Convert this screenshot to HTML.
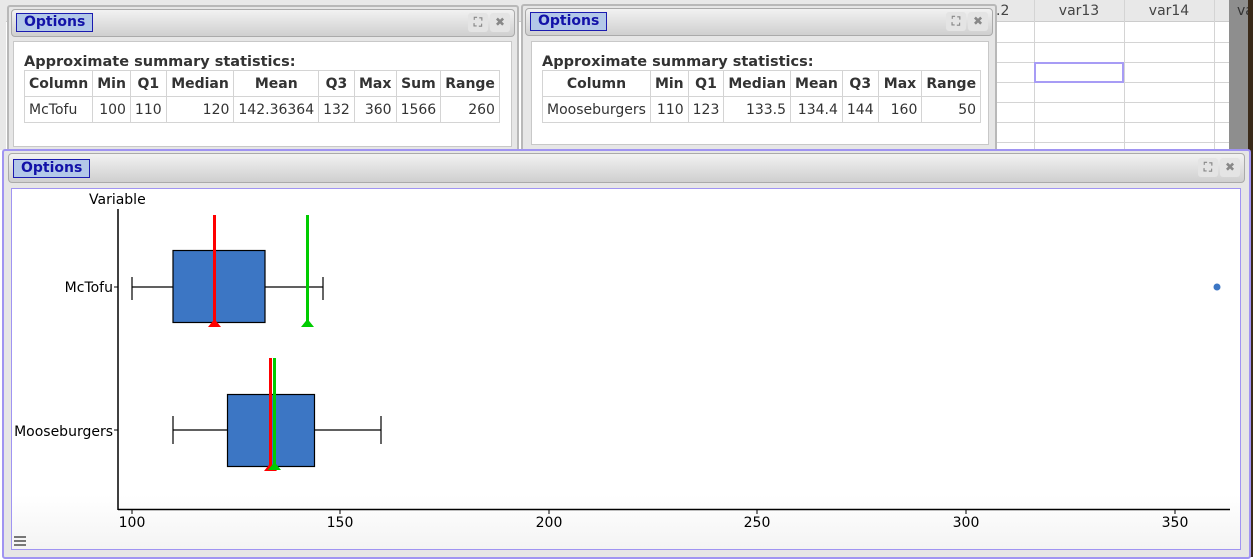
<!DOCTYPE html>
<html><head><style>
*{box-sizing:border-box;margin:0;padding:0}
body{width:1253px;height:557px;position:relative;overflow:hidden;background:#fff;font-family:"DejaVu Sans","Liberation Sans",sans-serif;}
.abs{position:absolute}
.win{position:absolute;background:#e6e6e6;border:2px solid #b8b8b8;border-radius:3px}
.tb{position:absolute;left:2px;right:2px;top:2px;height:28px;border:1px solid #aaa;border-radius:4px;background:linear-gradient(#f2f2f2,#cfcfcf)}
.opt{position:absolute;left:4px;top:3px;height:19px;border:1px solid #1b1bb0;background:#b3c8e8;color:#1212a8;font-weight:bold;font-size:14px;line-height:17px;padding:0 7px}
.btn{position:absolute;top:3px;width:20px;height:19px;border-radius:3px;background:#e4e4e4;color:#888;font-size:12px;text-align:center;line-height:19px;font-weight:bold}
.cont{position:absolute;background:#fff;border:1px solid #c8c8c8}
.h{position:absolute;font-weight:bold;font-size:14.5px;color:#333}
table{position:absolute;border-collapse:collapse;font-size:14px;color:#333}
td,th{border:1px solid #d4d4d4;padding:0 4px;height:26px;white-space:nowrap}
th{font-weight:bold;text-align:center}
td{text-align:right}
td:first-child{text-align:left}
.grid{position:absolute;background:#d4d4d4}
</style></head><body>
<div class="abs" style="left:0;top:0;width:1253px;height:22px;background:#e8e8e8;border-bottom:1px solid #ccc"></div>
<div class="abs" style="left:996px;top:3px;font-size:14px;color:#444">.2</div>
<div class="abs" style="left:1034px;top:3px;width:90px;text-align:center;font-size:14px;color:#444">var13</div>
<div class="abs" style="left:1124px;top:3px;width:90px;text-align:center;font-size:14px;color:#444">var14</div>
<div class="grid" style="left:1034px;top:0;width:1px;height:150px"></div>
<div class="grid" style="left:1124px;top:0;width:1px;height:150px"></div>
<div class="grid" style="left:1214px;top:0;width:1px;height:150px"></div>
<div class="grid" style="left:996px;top:42px;width:240px;height:1px"></div>
<div class="grid" style="left:996px;top:62px;width:240px;height:1px"></div>
<div class="grid" style="left:996px;top:82px;width:240px;height:1px"></div>
<div class="grid" style="left:996px;top:102px;width:240px;height:1px"></div>
<div class="grid" style="left:996px;top:122px;width:240px;height:1px"></div>
<div class="grid" style="left:996px;top:142px;width:240px;height:1px"></div>
<div class="abs" style="left:1034px;top:62px;width:90px;height:21px;border:2px solid #a79cf5"></div>
<div class="abs" style="left:1229px;top:0;width:19px;height:150px;background:#8e8e8e"></div>
<div class="abs" style="left:1237px;top:3px;font-size:14px;color:#333">va</div>
<div class="abs" style="left:1248px;top:0;width:5px;height:557px;background:#3a2a1a"></div>
<div class="abs" style="left:0;top:0;width:6px;height:150px;background:#e8e8e8"></div>

<div class="win" style="left:7px;top:5px;width:512px;height:147px">
<div class="tb"><div class="opt">Options</div><div class="btn" style="right:26px">⛶</div><div class="btn" style="right:4px">✖</div></div>
<div class="cont" style="left:4px;top:34px;width:499px;height:106px">
<div class="h" style="left:10px;top:12px">Approximate summary statistics:</div>
<table style="left:10px;top:28px"><tr><th>Column</th><th>Min</th><th>Q1</th><th>Median</th><th style="padding:0 17px">Mean</th><th>Q3</th><th>Max</th><th>Sum</th><th>Range</th></tr>
<tr><td>McTofu</td><td>100</td><td>110</td><td style="padding-left:36px">120</td><td>142.36364</td><td>132</td><td style="padding-left:10px">360</td><td>1566</td><td style="padding-left:26px">260</td></tr></table>
</div></div>

<div class="win" style="left:521px;top:4px;width:476px;height:148px">
<div class="tb"><div class="opt">Options</div><div class="btn" style="right:26px">⛶</div><div class="btn" style="right:4px">✖</div></div>
<div class="cont" style="left:8px;top:35px;width:458px;height:104px">
<div class="h" style="left:10px;top:12px">Approximate summary statistics:</div>
<table style="left:10px;top:28px"><tr><th style="padding:0 19px">Column</th><th>Min</th><th>Q1</th><th>Median</th><th>Mean</th><th>Q3</th><th>Max</th><th>Range</th></tr>
<tr><td>Mooseburgers</td><td>110</td><td>123</td><td style="padding-left:18px">133.5</td><td>134.4</td><td>144</td><td style="padding-left:12px">160</td><td style="padding-left:30px">50</td></tr></table>
</div></div>

<div class="abs" style="left:2px;top:149px;width:1249px;height:410px;background:#e6e6e6;border:2px solid #a094f2;border-radius:3px"></div>
<div class="abs" style="left:8px;top:153px;width:1237px;height:30px;border:1px solid #aaa;border-radius:4px;background:linear-gradient(#f2f2f2,#cfcfcf)">
<div class="opt" style="left:4px;top:5px">Options</div><div class="btn" style="right:26px;top:4px">⛶</div><div class="btn" style="right:4px;top:4px">✖</div></div>
<div class="abs" style="left:11px;top:188px;width:1230px;height:362px;border:1px solid #a094f2;background:linear-gradient(#fff 85%,#f4f4f4)"></div>
<div class="abs" style="left:14px;top:536px;width:12px;height:2px;background:#777;box-shadow:0 4px 0 #777,0 8px 0 #777"></div>

<svg class="abs" style="left:0;top:0" width="1253" height="557" font-family="DejaVu Sans, Liberation Sans, sans-serif" font-size="14">
<text x="89" y="204">Variable</text>
<line x1="118" y1="209" x2="118" y2="510" stroke="#000" stroke-width="1.5"/>
<line x1="118" y1="509.5" x2="1230" y2="509.5" stroke="#000" stroke-width="1.5"/>
<g stroke="#000" stroke-width="1">
<line x1="132" y1="509" x2="132" y2="514"/><line x1="340" y1="509" x2="340" y2="514"/><line x1="549" y1="509" x2="549" y2="514"/><line x1="757" y1="509" x2="757" y2="514"/><line x1="966" y1="509" x2="966" y2="514"/><line x1="1175" y1="509" x2="1175" y2="514"/>
<line x1="114" y1="287" x2="118" y2="287"/><line x1="114" y1="430" x2="118" y2="430"/>
</g>
<g text-anchor="middle"><text x="132" y="527">100</text><text x="340" y="527">150</text><text x="549" y="527">200</text><text x="757" y="527">250</text><text x="966" y="527">300</text><text x="1175" y="527">350</text></g>
<g text-anchor="end"><text x="113" y="292">McTofu</text><text x="113" y="436">Mooseburgers</text></g>
<g stroke="#000" stroke-width="1.2">
<line x1="132" y1="287" x2="174" y2="287"/><line x1="132" y1="277" x2="132" y2="300"/>
<line x1="265" y1="287" x2="323" y2="287"/><line x1="323" y1="277" x2="323" y2="300"/>
<rect x="173" y="250.5" width="92" height="72" fill="#3c76c4"/>
<line x1="173" y1="430" x2="228" y2="430"/><line x1="173" y1="416" x2="173" y2="444"/>
<line x1="315" y1="430" x2="381" y2="430"/><line x1="381" y1="416" x2="381" y2="444"/>
<rect x="227.5" y="394.5" width="87" height="72" fill="#3c76c4"/>
</g>
<rect x="213" y="215" width="3" height="110" fill="#f00"/><polygon points="208,327 221,327 214.5,319" fill="#f00"/>
<rect x="306" y="215" width="3" height="110" fill="#00cc00"/><polygon points="301,327 314,327 307.5,319" fill="#00cc00"/>
<rect x="269" y="358" width="3" height="111" fill="#f00"/><polygon points="264,471 277,471 270.5,463" fill="#f00"/>
<rect x="273" y="358" width="3" height="111" fill="#00cc00"/><polygon points="268,470 281,470 274.5,462" fill="#00cc00"/>
<circle cx="1217" cy="287" r="3.5" fill="#3c76c4"/>
</svg>
</body></html>
